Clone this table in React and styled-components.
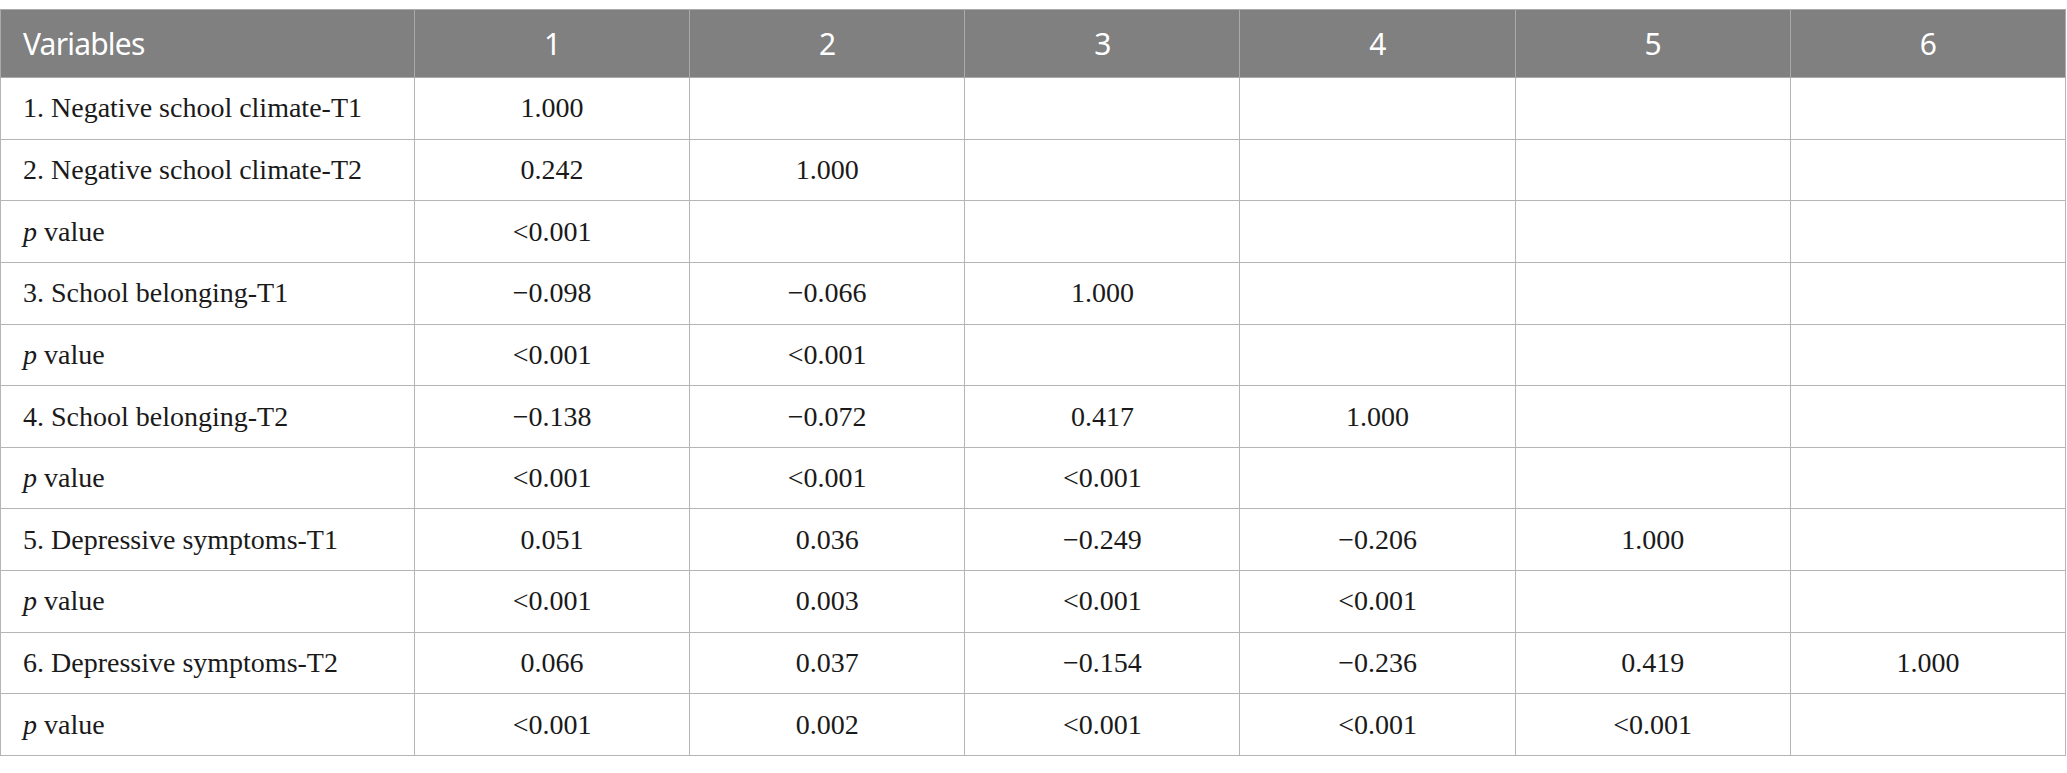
import React from 'react';
import styled, { createGlobalStyle } from 'styled-components';

const GlobalStyle = createGlobalStyle`
  html, body {
    margin: 0;
    padding: 0;
    background: #fff;
  }
`;

const Page = styled.div`
  padding-top: 9px;
  width: 2067px;
`;

const Table = styled.table`
  width: 2066px;
  border-collapse: collapse;
  table-layout: fixed;
  border: 1px solid #b5b5b5;
`;

const HeadCell = styled.th`
  background: #7f807f;
  color: #fff;
  font-family: "Noto Sans", "Open Sans", sans-serif;
  font-weight: 400;
  font-size: 30px;
  letter-spacing: -0.8px;
  height: 67px;
  padding: 0 22px;
  border: 1px solid #a9aaa9;
  text-align: ${p => (p.$left ? 'left' : 'center')};
  vertical-align: middle;
`;

const Cell = styled.td`
  font-family: "Liberation Serif", "Times New Roman", serif;
  font-size: 28px;
  color: #1a1a1a;
  height: 60.65px;
  padding: 0 22px;
  border: 1px solid #b5b5b5;
  text-align: ${p => (p.$left ? 'left' : 'center')};
  vertical-align: middle;
  white-space: nowrap;
`;

const Italic = styled.i`
  font-style: italic;
`;

const P = 'p';
const rows = [
  ['1. Negative school climate-T1', '1.000'],
  ['2. Negative school climate-T2', '0.242', '1.000'],
  [P, '<0.001'],
  ['3. School belonging-T1', '\u22120.098', '\u22120.066', '1.000'],
  [P, '<0.001', '<0.001'],
  ['4. School belonging-T2', '\u22120.138', '\u22120.072', '0.417', '1.000'],
  [P, '<0.001', '<0.001', '<0.001'],
  ['5. Depressive symptoms-T1', '0.051', '0.036', '\u22120.249', '\u22120.206', '1.000'],
  [P, '<0.001', '0.003', '<0.001', '<0.001'],
  ['6. Depressive symptoms-T2', '0.066', '0.037', '\u22120.154', '\u22120.236', '0.419', '1.000'],
  [P, '<0.001', '0.002', '<0.001', '<0.001', '<0.001'],
];

export default function App() {
  return (
    <Page>
      <GlobalStyle />
      <Table>
        <colgroup>
          <col style={{ width: 414 }} />
          {[1, 2, 3, 4, 5, 6].map(i => <col key={i} />)}
        </colgroup>
        <thead>
          <tr>
            <HeadCell $left>Variables</HeadCell>
            {[1, 2, 3, 4, 5, 6].map(n => <HeadCell key={n}>{n}</HeadCell>)}
          </tr>
        </thead>
        <tbody>
          {rows.map((r, i) => (
            <tr key={i}>
              <Cell $left>
                {r[0] === P ? <><Italic>p</Italic> value</> : r[0]}
              </Cell>
              {[1, 2, 3, 4, 5, 6].map(c => <Cell key={c}>{r[c] || ''}</Cell>)}
            </tr>
          ))}
        </tbody>
      </Table>
    </Page>
  );
}
